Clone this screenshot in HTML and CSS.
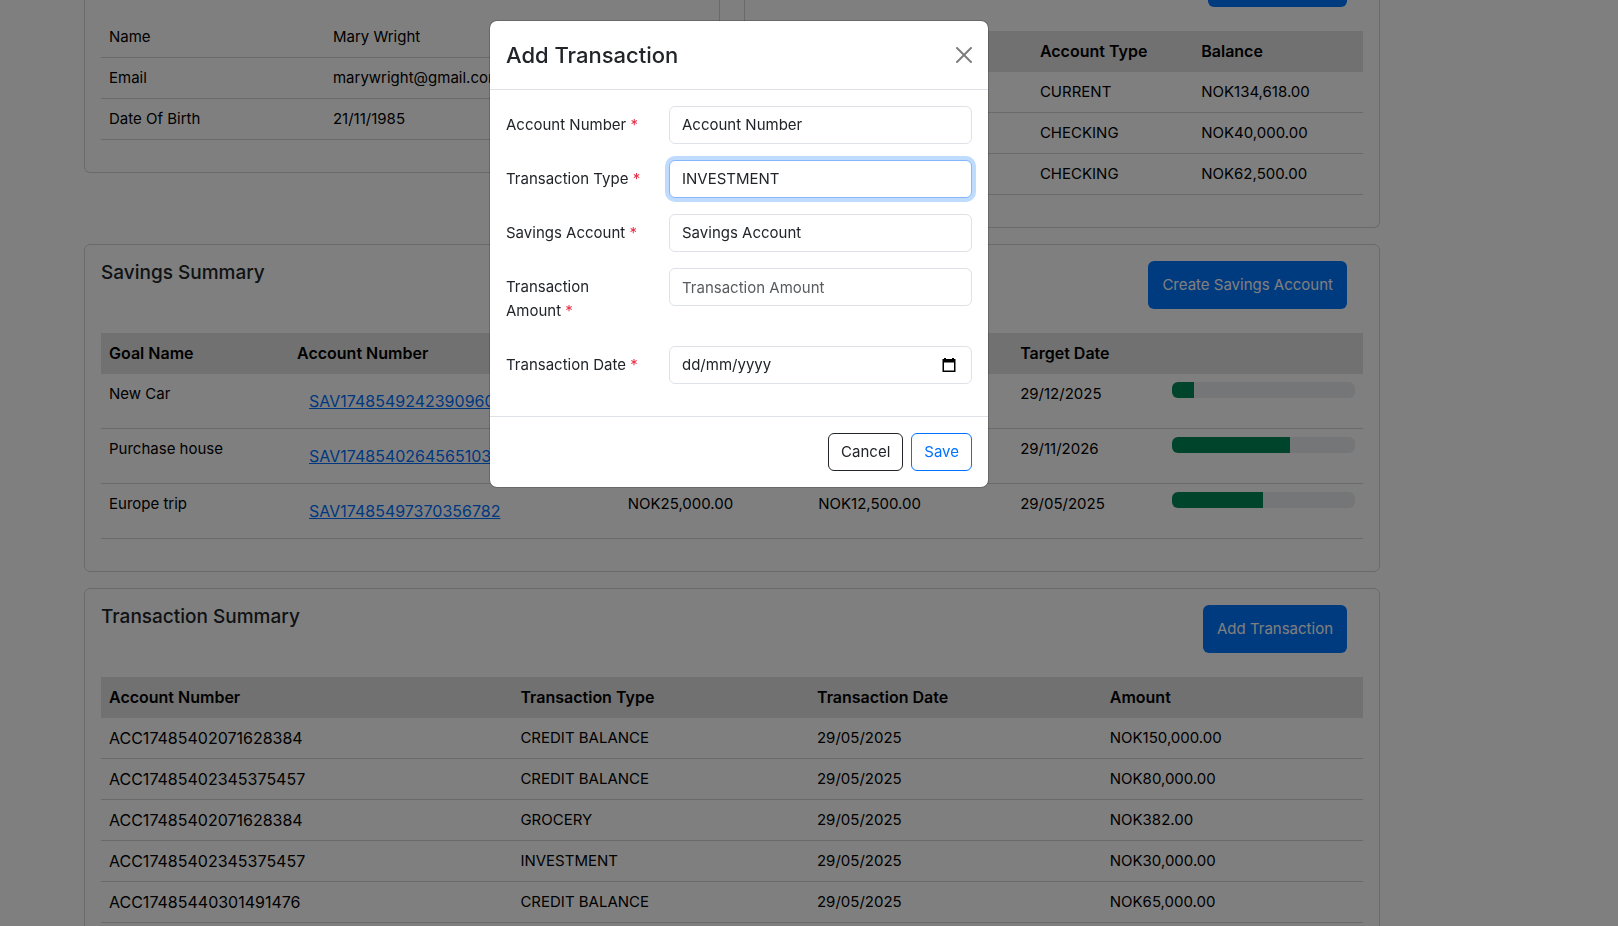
FILE: index.html
```html
<!DOCTYPE html>
<html lang="en-GB">
<head>
<meta charset="utf-8">
<meta name="viewport" content="width=device-width, initial-scale=1">
<title>Account overview</title>
<link rel="stylesheet" href="styles.css">
</head>
<body>
<main class="page">
  <div class="container">
    <div class="row">
      <section class="card card-cut profile">
        <table class="table">
          <colgroup><col class="p-label"><col></colgroup>
          <tbody>
            <tr><td>Name</td><td>Mary Wright</td></tr>
            <tr><td>Email</td><td>marywright@gmail.com</td></tr>
            <tr><td>Date Of Birth</td><td>21/11/1985</td></tr>
          </tbody>
        </table>
      </section>
      <section class="card card-cut accounts">
        <div class="card-head head-cut"><button type="button" class="btn btn-primary btn-account" aria-label="Create account"></button></div>
        <table class="table">
          <colgroup><col class="a-number"><col class="a-type"><col></colgroup>
          <thead><tr><th>Account Number</th><th>Account Type</th><th>Balance</th></tr></thead>
          <tbody>
            <tr><td class="number">ACC17485402071628384</td><td>CURRENT</td><td>NOK134,618.00</td></tr>
            <tr><td class="number">ACC17485402345375457</td><td>CHECKING</td><td>NOK40,000.00</td></tr>
            <tr><td class="number">ACC17485440301491476</td><td>CHECKING</td><td>NOK62,500.00</td></tr>
          </tbody>
        </table>
      </section>
    </div>

    <section class="card">
      <div class="card-head">
        <h2 class="card-title">Savings Summary</h2>
        <button type="button" class="btn btn-primary">Create Savings Account</button>
      </div>
      <table class="table">
        <colgroup><col class="s-goal"><col class="s-number"><col class="s-target"><col class="s-current"><col class="s-date"><col></colgroup>
        <thead><tr><th>Goal Name</th><th>Account Number</th><th>Target Amount</th><th>Current Amount</th><th>Target Date</th><th></th></tr></thead>
        <tbody>
          <tr>
            <td>New Car</td><td class="number"><a class="link" href="#">SAV17485492423909604</a></td><td>NOK80,000.00</td><td>NOK10,000.00</td><td>29/12/2025</td>
            <td><div class="progress"><div class="bar" style="width:12.5%"></div></div></td>
          </tr>
          <tr>
            <td>Purchase house</td><td class="number"><a class="link" href="#">SAV17485402645651032</a></td><td>NOK85,000.00</td><td>NOK55,000.00</td><td>29/11/2026</td>
            <td><div class="progress"><div class="bar" style="width:64.7%"></div></div></td>
          </tr>
          <tr>
            <td>Europe trip</td><td class="number"><a class="link" href="#">SAV17485497370356782</a></td><td>NOK25,000.00</td><td>NOK12,500.00</td><td>29/05/2025</td>
            <td><div class="progress"><div class="bar" style="width:50%"></div></div></td>
          </tr>
        </tbody>
      </table>
    </section>

    <section class="card">
      <div class="card-head">
        <h2 class="card-title">Transaction Summary</h2>
        <button type="button" class="btn btn-primary">Add Transaction</button>
      </div>
      <table class="table">
        <colgroup><col class="t-number"><col class="t-type"><col class="t-date"><col></colgroup>
        <thead><tr><th>Account Number</th><th>Transaction Type</th><th>Transaction Date</th><th>Amount</th></tr></thead>
        <tbody>
          <tr><td class="number">ACC17485402071628384</td><td>CREDIT BALANCE</td><td>29/05/2025</td><td>NOK150,000.00</td></tr>
          <tr><td class="number">ACC17485402345375457</td><td>CREDIT BALANCE</td><td>29/05/2025</td><td>NOK80,000.00</td></tr>
          <tr><td class="number">ACC17485402071628384</td><td>GROCERY</td><td>29/05/2025</td><td>NOK382.00</td></tr>
          <tr><td class="number">ACC17485402345375457</td><td>INVESTMENT</td><td>29/05/2025</td><td>NOK30,000.00</td></tr>
          <tr><td class="number">ACC17485440301491476</td><td>CREDIT BALANCE</td><td>29/05/2025</td><td>NOK65,000.00</td></tr>
        </tbody>
      </table>
    </section>
  </div>
</main>

<div class="backdrop"></div>
<div class="modal" role="dialog" aria-modal="true" aria-labelledby="dialog-title">
  <form class="dialog">
    <div class="dialog-head">
      <h1 class="dialog-title" id="dialog-title">Add Transaction</h1>
      <button type="button" class="close" aria-label="Close">
        <svg viewBox="0 0 16 16" width="16" height="16"><path d="M.293.293a1 1 0 0 1 1.414 0L8 6.586 14.293.293a1 1 0 1 1 1.414 1.414L9.414 8l6.293 6.293a1 1 0 0 1-1.414 1.414L8 9.414l-6.293 6.293a1 1 0 0 1-1.414-1.414L6.586 8 .293 1.707a1 1 0 0 1 0-1.414"/></svg>
      </button>
    </div>
    <div class="dialog-body">
      <div class="field">
        <label for="account">Account Number <span class="req">*</span></label>
        <select class="control" id="account"><option>Account Number</option></select>
      </div>
      <div class="field">
        <label for="type">Transaction Type <span class="req">*</span></label>
        <select class="control is-focused" id="type"><option>INVESTMENT</option></select>
      </div>
      <div class="field">
        <label for="savings">Savings Account <span class="req">*</span></label>
        <select class="control" id="savings"><option>Savings Account</option></select>
      </div>
      <div class="field">
        <label for="amount">Transaction Amount <span class="req">*</span></label>
        <input class="control" id="amount" type="text" placeholder="Transaction Amount">
      </div>
      <div class="field">
        <label for="date">Transaction Date <span class="req">*</span></label>
        <div class="control date">
          <input class="date-input" id="date" type="text" placeholder="dd/mm/yyyy">
          <button type="button" class="picker" aria-label="Pick a date">
            <svg viewBox="0 0 14 14" width="14" height="14"><path fill-rule="evenodd" d="M2 0h2v1h6V0h2v1h1.500v13H.5V1H2zM2 4.500v8h10v-8z"/></svg>
          </button>
        </div>
      </div>
    </div>
    <div class="dialog-foot">
      <button type="button" class="btn btn-outline-dark">Cancel</button>
      <button type="submit" class="btn btn-outline-primary">Save</button>
    </div>
  </form>
</div>
</body>
</html>
```
FILE: styles.css
```css
*, *::before, *::after { box-sizing: border-box; }

body {
  margin: 0;
  height: 100vh;
  overflow: hidden;
  background: #fff;
  color: #212529;
  font: 400 15px/24px Inter, "Liberation Sans", sans-serif;
}

button, input, select { font: inherit; color: inherit; }

.page { padding: 0 154px 0 0; }
.container { max-width: 1320px; margin: 0 auto; padding: 0 12px; }
.row { display: grid; grid-template-columns: 1fr 1fr; gap: 24px; align-items: start; }

.card {
  margin-bottom: 16px;
  padding: 16px;
  border: 1px solid #d5d5d5;
  border-radius: 6px;
}
.card-cut { border-top: 0; border-top-left-radius: 0; border-top-right-radius: 0; }
.profile { padding-top: 17px; }
.accounts { padding-top: 0; }

.card-head {
  display: flex;
  justify-content: space-between;
  align-items: flex-start;
  margin-bottom: 24px;
  padding-right: 16px;
}
.card-title { margin: 0; font-size: 19px; line-height: 24px; font-weight: 500; }
.head-cut { justify-content: flex-end; }

.table {
  width: 100%;
  margin-bottom: 16px;
  border-collapse: separate;
  border-spacing: 0;
  table-layout: fixed;
  color: #000;
}
.table th, .table td {
  padding: 8px;
  border-bottom: 1px solid #d5d5d5;
  text-align: left;
  vertical-align: top;
}
.table th {
  height: 41px;
  background: #e3e3e3;
  border-bottom-color: #e3e3e3;
  font-size: 16px;
  font-weight: 600;
}
.number { font-size: 16px; }

.p-label { width: 37.2%; }
.a-number { width: 45%; }
.a-type { width: 26.8%; }
.s-goal { width: 14.9%; }
.s-number { width: 26.2%; }
.s-target { width: 15.1%; }
.s-current { width: 16%; }
.s-date { width: 12%; }
.t-number { width: 32.6%; }
.t-type { width: 23.5%; }
.t-date { width: 23.2%; }

.link {
  display: inline-block;
  padding: 7px 12px;
  vertical-align: top;
  color: #0071ff;
  text-decoration: underline;
}

.progress { display: flex; height: 16px; overflow: hidden; border-radius: 6px; background: #e9ecef; }
.bar { background: #008a57; }

.btn {
  padding: 6px 12px;
  border: 1px solid transparent;
  border-radius: 6px;
  background: transparent;
  cursor: pointer;
}
.btn-primary { height: 48px; padding: 6px 13px; background: #0074ff; color: #fff; }
.btn-account {
  width: 139px;
  height: 7px;
  padding: 0;
  border-top-left-radius: 0;
  border-top-right-radius: 0;
}
.btn-outline-dark { border-color: #212529; }
.btn-outline-primary { border-color: #0074ff; color: #0074ff; }

.backdrop { position: fixed; inset: 0; background: rgba(0, 0, 0, .5); }

.modal { position: fixed; inset: 0 140px 0 0; padding-top: 20px; }
.dialog {
  max-width: 500px;
  margin: 0 auto;
  border: 1px solid rgba(0, 0, 0, .18);
  border-radius: 8px;
  background: #fff;
  background-clip: padding-box;
}
.dialog-head {
  display: flex;
  justify-content: space-between;
  align-items: center;
  padding: 16px;
  border-bottom: 1px solid #dee2e6;
}
.dialog-title { margin: 0; font-size: 22px; line-height: 36px; font-weight: 500; }
.close, .picker { display: flex; padding: 0; border: 0; background: none; cursor: pointer; }
.close { opacity: .5; }

.dialog-body { padding: 16px; }
.field {
  display: grid;
  grid-template-columns: 139px 1fr;
  column-gap: 24px;
  align-items: start;
  margin-bottom: 16px;
}
.field label { padding: 7px 0; }
.req { color: #e82b43; }

.control {
  width: 100%;
  height: 38px;
  padding: 6px 12px;
  border: 1px solid #dee2e6;
  border-radius: 6px;
  background: #fff;
  appearance: none;
  outline: 0;
}
.control::placeholder { color: #595c5f; opacity: 1; }
.is-focused { border-color: #86b7fe; box-shadow: 0 0 0 4px #bfdcff; }
.date { display: flex; align-items: center; padding-right: 15px; }
.date-input { flex: 1; min-width: 0; padding: 0; border: 0; outline: 0; background: none; }
.date-input::placeholder { color: #212529; opacity: 1; }

.dialog-foot {
  display: flex;
  justify-content: flex-end;
  gap: 8px;
  padding: 16px;
  border-top: 1px solid #dee2e6;
}
```
